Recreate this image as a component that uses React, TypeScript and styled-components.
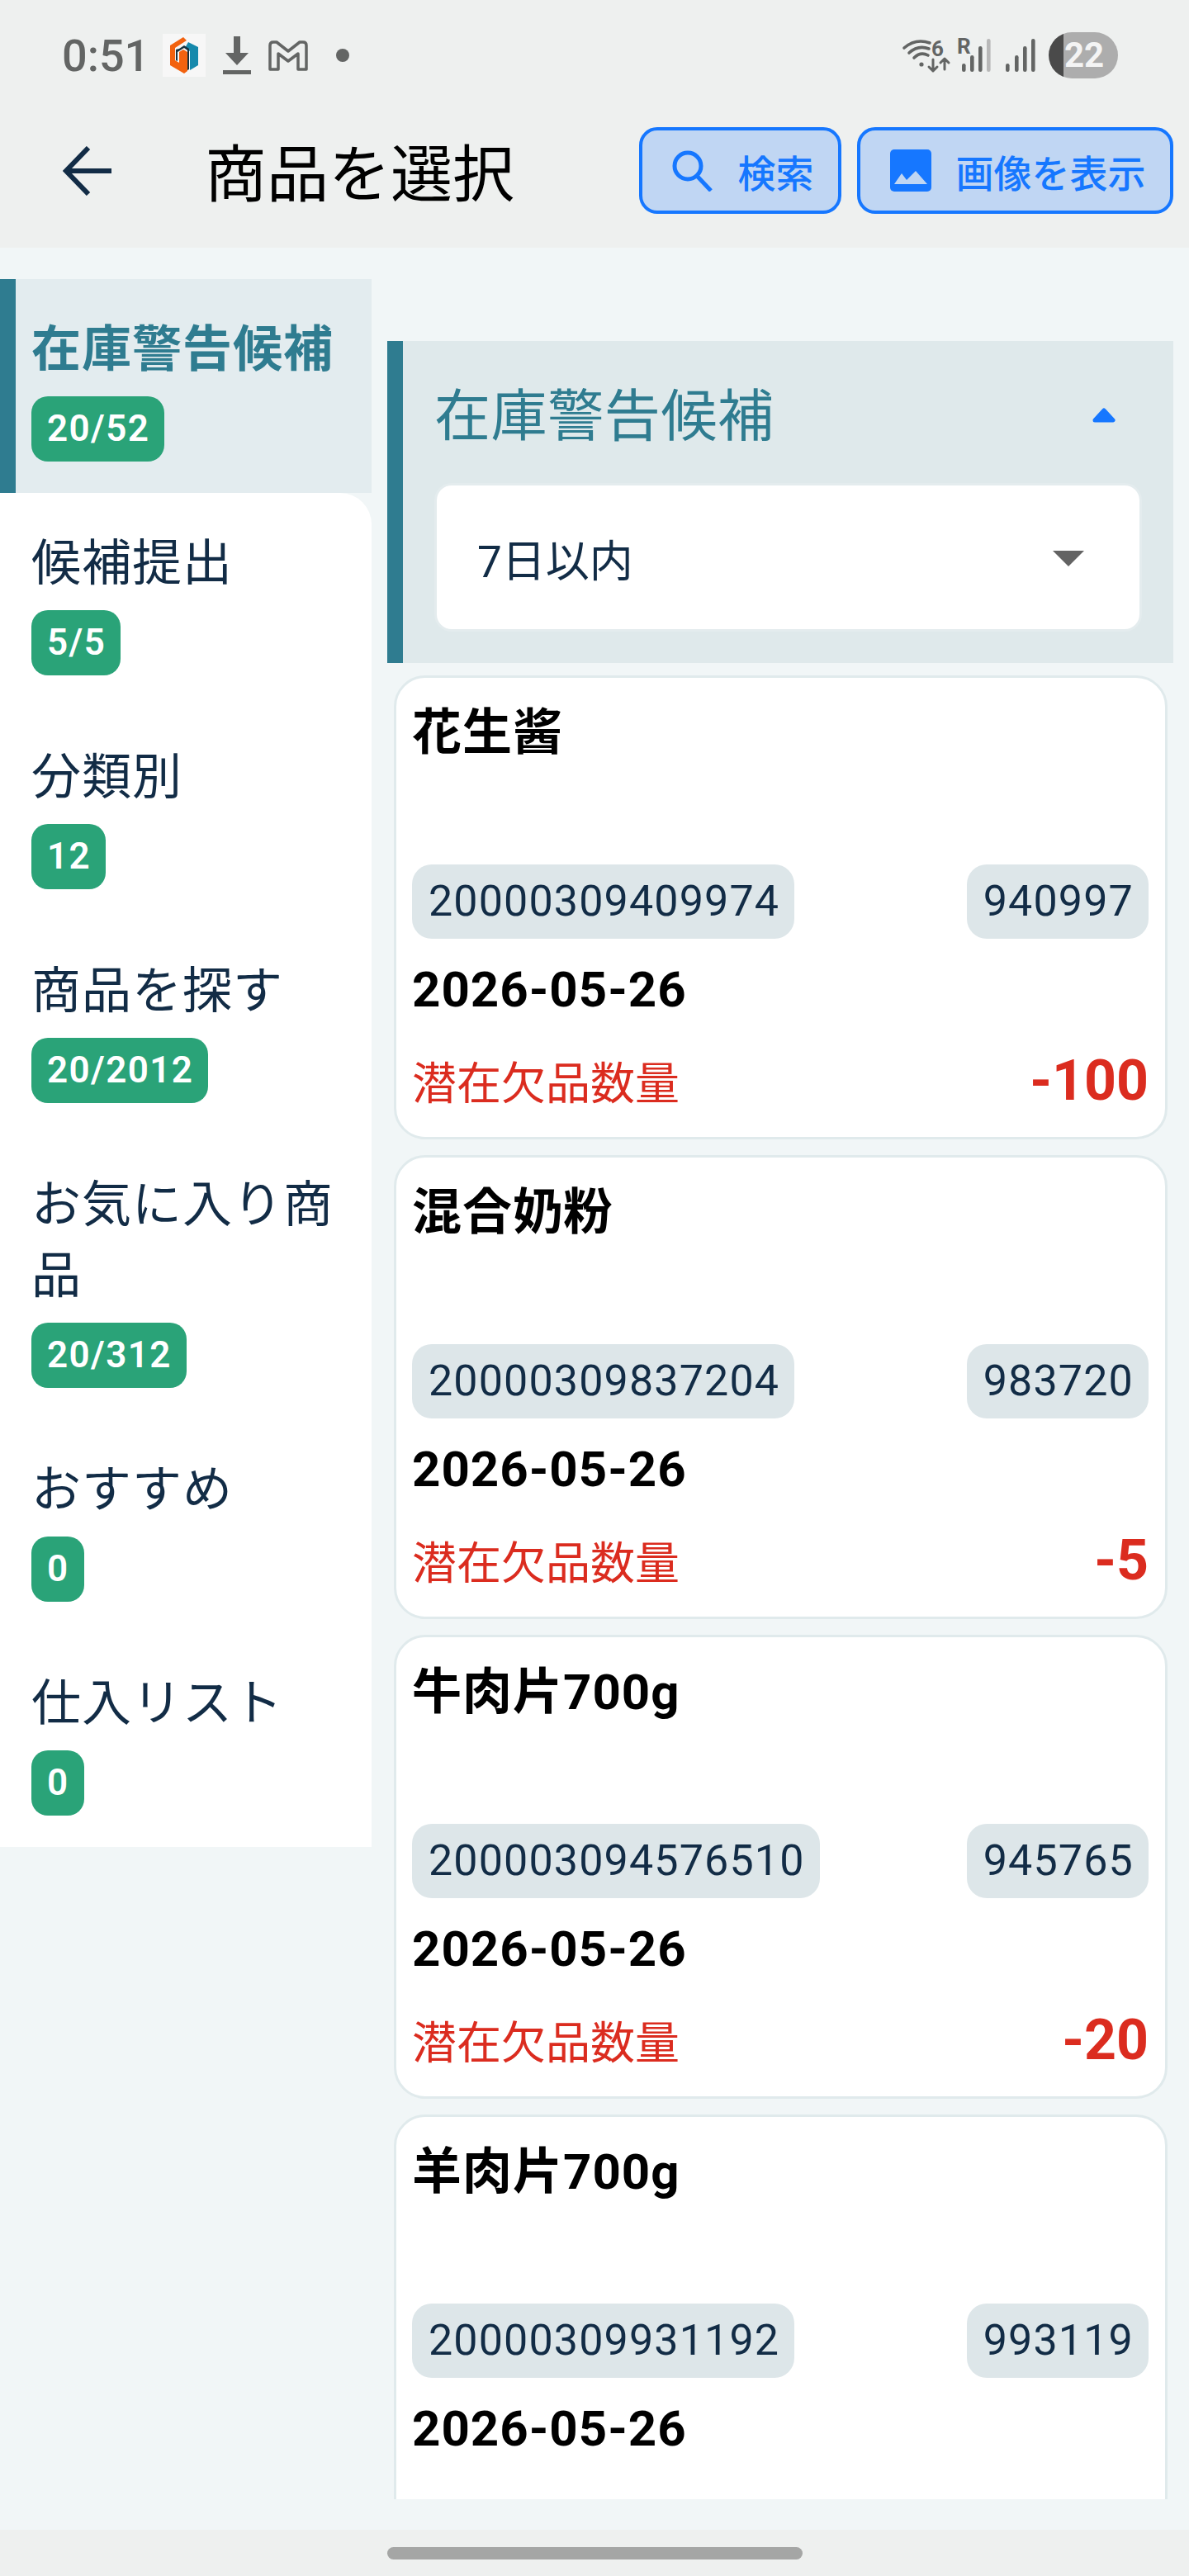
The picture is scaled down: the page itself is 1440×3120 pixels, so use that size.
import { createGlobalStyle, styled } from "styled-components";

const GlobalStyle = createGlobalStyle`
  html, body {
    margin: 0;
    padding: 0;
    background: #f1f6f7;
    font-family: Roboto, "Noto Sans CJK JP", sans-serif;
  }
  * {
    box-sizing: border-box;
  }
`;

const Screen = styled.div`
  width: 1440px;
  height: 3120px;
  display: flex;
  flex-direction: column;
  overflow: hidden;
  background: #f1f6f7;
`;

const TopArea = styled.header`
  height: 300px;
  background: #eef0ef;
`;

const StatusBar = styled.div`
  height: 134px;
  display: flex;
  align-items: center;
  padding: 0 86px 0 75px;
`;

const Time = styled.span`
  font-size: 54px;
  font-weight: 500;
  color: #636564;
  width: 97px;
  margin-right: 25px;
  white-space: nowrap;
`;

const StatusIcon = styled.svg<{ $left?: number }>`
  display: block;
  flex: none;
  overflow: visible;
  margin-left: ${(p) => p.$left ?? 0}px;
`;

const Spacer = styled.div`
  flex: 1;
`;

const Battery = styled.div`
  width: 84px;
  height: 56px;
  margin-left: 16px;
  border-radius: 28px;
  background: linear-gradient(90deg, #4a4a4a 18px, #adadad 18px);
  color: #f4f4f4;
  font-size: 42px;
  font-weight: 700;
  line-height: 56px;
  padding-left: 19px;
`;

const TitleBar = styled.div`
  display: flex;
  align-items: flex-start;
  padding: 20px 19px 0 76px;
`;

const BackIcon = styled.svg`
  display: block;
  margin-top: 23px;
`;

const Title = styled.h1`
  margin: 8px 0 0 112px;
  font-size: 75px;
  font-weight: 400;
  line-height: 100px;
  color: #000;
  white-space: nowrap;
`;

const Actions = styled.div`
  margin-left: auto;
  display: flex;
  gap: 19px;
`;

const ActionButton = styled.button<{ $width: number }>`
  width: ${(p) => p.$width}px;
  height: 105px;
  display: flex;
  align-items: center;
  justify-content: center;
  gap: 30px;
  padding: 0 0 0 6px;
  border: 4px solid #1677ff;
  border-radius: 22px;
  background: #c0d6f3;
  color: #1677ff;
  font-family: inherit;
  font-size: 46px;
  font-weight: 500;
  white-space: nowrap;
`;

const Body = styled.main`
  flex: 1;
  min-height: 0;
  display: flex;
  align-items: stretch;
  padding: 38px 19px 37px 0;
`;

const Sidebar = styled.nav`
  width: 450px;
  flex: none;
  align-self: flex-start;
`;

const SideList = styled.div`
  background: #fff;
  border-top-right-radius: 38px;
`;

const SideItem = styled.div<{ $active?: boolean }>`
  padding: 43px 38px 38px ${(p) => (p.$active ? "19px" : "38px")};
  background: ${(p) => (p.$active ? "#e3ecef" : "transparent")};
  border-left: ${(p) => (p.$active ? "19px solid #2f7c90" : "none")};
`;

const SideLabel = styled.div<{ $active?: boolean }>`
  font-size: 60px;
  line-height: 86px;
  letter-spacing: 1px;
  font-weight: ${(p) => (p.$active ? 700 : 400)};
  color: ${(p) => (p.$active ? "#2f7c90" : "#122c46")};
  white-space: ${(p) => (p.$active ? "nowrap" : "normal")};
`;

const CountBadge = styled.span`
  display: inline-block;
  height: 79px;
  margin-top: 13px;
  padding: 0 18px 0 19px;
  border-radius: 20px;
  background: #2aa378;
  color: #fff;
  font-size: 44px;
  font-weight: 600;
  line-height: 79px;
  letter-spacing: 1.4px;
  vertical-align: top;
`;

const Content = styled.section`
  flex: 1;
  min-width: 0;
  margin-left: 19px;
  padding-top: 75px;
  overflow: hidden;
`;

const Panel = styled.div`
  height: 390px;
  padding: 40px 41px 41px 41px;
  background: #dfe9eb;
  border-left: 19px solid #2f7c90;
`;

const PanelHead = styled.div`
  height: 100px;
  margin-bottom: 35px;
  display: flex;
  align-items: center;
  justify-content: space-between;
  padding-right: 28px;
`;

const PanelTitle = styled.h2`
  margin: 4px 0 0 -3px;
  font-size: 68px;
  font-weight: 400;
  line-height: 100px;
  letter-spacing: 0.6px;
  color: #2f7c90;
`;

const Select = styled.div`
  height: 174px;
  display: flex;
  align-items: center;
  justify-content: space-between;
  padding: 2px 67px 0 49px;
  background: #fff;
  border-radius: 18px;
  box-shadow: 0 0 0 3px #e4ecee;
  color: #122c46;
  font-size: 53px;
`;

const CardList = styled.div`
  display: flex;
  flex-direction: column;
  gap: 19px;
  margin: 15px 7px 0 8px;
`;

const Card = styled.article`
  height: 562px;
  flex: none;
  padding: 24px 20px 0 19px;
  background: #fff;
  border: 3px solid #e0eaec;
  border-radius: 38px;
`;

const ProductName = styled.div`
  height: 202px;
  font-size: 60px;
  font-weight: 700;
  line-height: 86px;
  letter-spacing: 1px;
  color: #000;
`;

const CodeRow = styled.div`
  display: flex;
  justify-content: space-between;
`;

const CodePill = styled.span`
  height: 90px;
  padding: 0 18px 0 20px;
  border-radius: 24px;
  background: #dde6e9;
  color: #122c46;
  font-size: 52px;
  line-height: 90px;
  letter-spacing: 1.15px;
`;

const DateText = styled.div`
  margin-top: 19px;
  font-size: 60px;
  font-weight: 700;
  line-height: 86px;
  letter-spacing: 1px;
  color: #000;
`;

const ShortageRow = styled.div`
  margin-top: 27px;
  display: flex;
  align-items: baseline;
  justify-content: space-between;
  color: #db2c1f;
`;

const ShortageLabel = styled.span`
  font-size: 54px;
`;

const ShortageValue = styled.span`
  font-size: 68px;
  font-weight: 700;
`;

const NavBar = styled.footer`
  height: 56px;
  flex: none;
  padding-top: 21px;
  background: #eef0ef;
`;

const HomeBar = styled.div`
  width: 503px;
  height: 15px;
  margin: 0 auto;
  border-radius: 8px;
  background: #a5a6a5;
`;

const sideItems = [
  { label: "在庫警告候補", count: "20/52", active: true },
  { label: "候補提出", count: "5/5" },
  { label: "分類別", count: "12" },
  { label: "商品を探す", count: "20/2012" },
  { label: "お気に入り商品", count: "20/312" },
  { label: "おすすめ", count: "0" },
  { label: "仕入リスト", count: "0" },
];

const products = [
  { name: "花生酱", code: "20000309409974", short: "940997", amount: "-100" },
  { name: "混合奶粉", code: "20000309837204", short: "983720", amount: "-5" },
  { name: "牛肉片700g", code: "200003094576510", short: "945765", amount: "-20" },
  { name: "羊肉片700g", code: "20000309931192", short: "993119", amount: "" },
];

const GREY = "#636564";

function SignalBars({ xs, last }: { xs: number[]; last: string }) {
  const tops = [30, 20, 9, 0];
  return (
    <>
      {xs.map((x, i) => (
        <rect
          key={x}
          x={x}
          y={tops[i]}
          width={4.6}
          height={40 - tops[i]}
          rx={2.3}
          fill={i === 3 ? last : GREY}
        />
      ))}
    </>
  );
}

export default function App() {
  return (
    <Screen>
      <GlobalStyle />
      <TopArea>
        <StatusBar>
          <Time>0:51</Time>
          <StatusIcon width="52" height="52" viewBox="0 0 52 52">
            <rect width="52" height="52" fill="#f7f7f7" />
            <path d="M25 4 L9 14 V38 L26 48 L30 45 V22 L25 19 L20 22 V35 L15 32 V17 L29 8 Z" fill="#f2620f" />
            <path d="M31 10 L43 16 V38 L33 44 V21 L27 17 Z" fill="#1689ac" />
            <path d="M20 18 L26 14 L32 18 V43 L30 44 V20 L26 17 L18 22 V33 L16 32 V19 Z" fill="#16323f" />
          </StatusIcon>
          <StatusIcon $left={21} width="34" height="46" viewBox="0 0 34 46">
            <path d="M13 0 H21 V20 H31 L17 35 L3 20 H13 Z" fill={GREY} />
            <rect x="0" y="41" width="34" height="5" fill={GREY} />
          </StatusIcon>
          <StatusIcon $left={21} width="48" height="37" viewBox="0 0 48 37">
            <path
              d="M2 6 Q2 2 6 2 H10 L24 13 L38 2 H42 Q46 2 46 6 V35 H36 V16 L24 25 L12 16 V35 H2 Z"
              fill="none"
              stroke={GREY}
              strokeWidth="3.5"
              strokeLinejoin="round"
            />
          </StatusIcon>
          <StatusIcon $left={34} width="16" height="16" viewBox="0 0 16 16">
            <circle cx="8" cy="8" r="8" fill={GREY} />
          </StatusIcon>
          <Spacer />
          <StatusIcon width="58" height="41" viewBox="0 0 58 41">
            <g fill="none" stroke={GREY} strokeWidth="3.6" strokeLinecap="round">
              <path d="M2 11 Q16 -1 33 5" />
              <path d="M14 23 Q22 15 31 20" />
              <path d="M8 17 Q19 7 32 12" />
            </g>
            <circle cx="23" cy="31" r="2.6" fill={GREY} />
            <text x="35" y="21" fontSize="26" fontWeight="700" fontFamily="Roboto" fill={GREY}>
              6
            </text>
            <path
              d="M37 25 V39 M32 34 L37 39 L42 34 M51 37 V24 M46 29 L51 24 L56 29"
              fill="none"
              stroke={GREY}
              strokeWidth="3"
              strokeLinecap="round"
              strokeLinejoin="round"
            />
          </StatusIcon>
          <StatusIcon $left={8} width="40" height="40" viewBox="0 0 40 40">
            <text x="0" y="18" fontSize="26" fontWeight="700" fontFamily="Roboto" fill={GREY}>
              R
            </text>
            <SignalBars xs={[6, 16, 26, 36]} last="#b8b8b8" />
          </StatusIcon>
          <StatusIcon $left={19} width="36" height="40" viewBox="0 0 36 40">
            <SignalBars xs={[0, 11, 21, 31]} last={GREY} />
          </StatusIcon>
          <Battery>22</Battery>
        </StatusBar>
        <TitleBar>
          <BackIcon width="60" height="60" viewBox="0 0 60 60">
            <path
              d="M59 30 H4 M31 2 L4 30 L31 58"
              fill="none"
              stroke="#122c46"
              strokeWidth="6"
            />
          </BackIcon>
          <Title>商品を選択</Title>
          <Actions>
            <ActionButton $width={245}>
              <svg width="50" height="50" viewBox="0 0 50 50">
                <circle cx="19" cy="19" r="16" fill="none" stroke="#1677ff" strokeWidth="5" />
                <path d="M30 31 L47 49" stroke="#1677ff" strokeWidth="5" />
              </svg>
              検索
            </ActionButton>
            <ActionButton $width={383}>
              <svg width="50" height="51" viewBox="0 0 50 51">
                <rect width="50" height="51" rx="5" fill="#1677ff" />
                <path d="M5 42 L14 29 L20 37 L31 26 L45 42 Z" fill="#c0d6f3" />
              </svg>
              画像を表示
            </ActionButton>
          </Actions>
        </TitleBar>
      </TopArea>
      <Body>
        <Sidebar>
          {sideItems
            .filter((item) => item.active)
            .map((item) => (
              <SideItem key={item.label} $active>
                <SideLabel $active>{item.label}</SideLabel>
                <CountBadge>{item.count}</CountBadge>
              </SideItem>
            ))}
          <SideList>
            {sideItems
              .filter((item) => !item.active)
              .map((item) => (
                <SideItem key={item.label}>
                  <SideLabel>{item.label}</SideLabel>
                  <CountBadge>{item.count}</CountBadge>
                </SideItem>
              ))}
          </SideList>
        </Sidebar>
        <Content>
          <Panel>
            <PanelHead>
              <PanelTitle>在庫警告候補</PanelTitle>
              <svg width="30" height="18" viewBox="0 0 30 18">
                <path d="M15 3 L26 15 H4 Z" fill="#1677ff" stroke="#1677ff" strokeWidth="5" strokeLinejoin="round" />
              </svg>
            </PanelHead>
            <Select>
              7日以内
              <svg width="38" height="19" viewBox="0 0 38 19">
                <path d="M0 0 H38 L19 19 Z" fill="#636363" />
              </svg>
            </Select>
          </Panel>
          <CardList>
            {products.map((product) => (
              <Card key={product.short}>
                <ProductName>{product.name}</ProductName>
                <CodeRow>
                  <CodePill>{product.code}</CodePill>
                  <CodePill>{product.short}</CodePill>
                </CodeRow>
                <DateText>2026-05-26</DateText>
                {product.amount && (
                  <ShortageRow>
                    <ShortageLabel>潜在欠品数量</ShortageLabel>
                    <ShortageValue>{product.amount}</ShortageValue>
                  </ShortageRow>
                )}
              </Card>
            ))}
          </CardList>
        </Content>
      </Body>
      <NavBar>
        <HomeBar />
      </NavBar>
    </Screen>
  );
}
